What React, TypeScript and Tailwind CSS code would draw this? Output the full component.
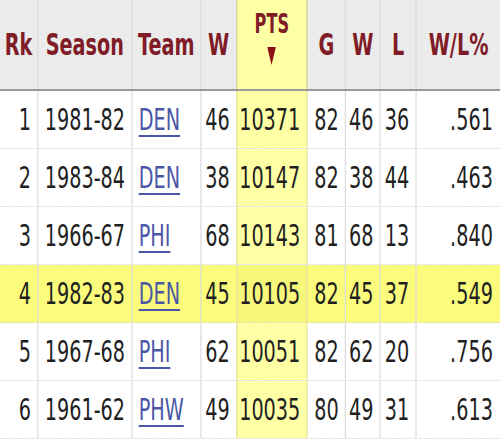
import React from 'react';

type Row = {
    rk: number;
    season: string;
    team: string;
    w: number;
    pts: number;
    g: number;
    w2: number;
    l: number;
    pct: string;
    hi?: boolean;
};

const rows: Row[] = [
    { rk: 1, season: '1981-82', team: 'DEN', w: 46, pts: 10371, g: 82, w2: 46, l: 36, pct: '.561' },
    { rk: 2, season: '1983-84', team: 'DEN', w: 38, pts: 10147, g: 82, w2: 38, l: 44, pct: '.463' },
    { rk: 3, season: '1966-67', team: 'PHI', w: 68, pts: 10143, g: 81, w2: 68, l: 13, pct: '.840' },
    { rk: 4, season: '1982-83', team: 'DEN', w: 45, pts: 10105, g: 82, w2: 45, l: 37, pct: '.549', hi: true },
    { rk: 5, season: '1967-68', team: 'PHI', w: 62, pts: 10051, g: 82, w2: 62, l: 20, pct: '.756' },
    { rk: 6, season: '1961-62', team: 'PHW', w: 49, pts: 10035, g: 80, w2: 49, l: 31, pct: '.613' },
];

const line = 'border-l-2 border-[#dcdcdc]';

const App: React.FC = () => {
    return (
        <div className="w-[500px] h-[440px] overflow-hidden bg-white">
            {/* the source table is squeezed sideways, so lay it out wide and scale x */}
            <div className="w-[807px] origin-top-left scale-x-[0.62] font-['DejaVu_Sans',sans-serif] text-[31px] text-[#1f1f1f]">
                <div className="flex h-[91px] bg-[#ebebeb] border-b-2 border-[#9a9a9a] font-bold text-[#7f1c27]">
                    <div className="w-[60px] flex items-center justify-center">Rk</div>
                    <div className={`w-[152px] flex items-center justify-center ${line}`}>Season</div>
                    <div className={`w-[111px] flex items-center justify-center ${line}`}>Team</div>
                    <div className={`w-[58px] flex items-center justify-center ${line}`}>W</div>
                    <div className="w-[116px] flex flex-col items-center bg-[#ffffa6] border-x-2 border-[#cfcf9a] pt-[9px]">
                        <span className="text-[26px] leading-[30px]">PTS</span>
                        <svg width="14" height="18" viewBox="0 0 14 18" className="mt-[8px]">
                            <polygon points="0,0 14,0 7,18" fill="#8b0f14" />
                        </svg>
                    </div>
                    <div className="w-[60px] flex items-center justify-center">G</div>
                    <div className={`w-[56px] flex items-center justify-center ${line}`}>W</div>
                    <div className={`w-[58px] flex items-center justify-center ${line}`}>L</div>
                    <div className={`w-[137px] flex items-center justify-center ${line}`}>W/L%</div>
                </div>
                {rows.map((r) => (
                    <div
                        key={r.rk}
                        className={`flex h-[58px] border-b border-dotted border-[#d0d0d0] ${r.hi ? 'bg-[#fbfb7c]' : 'bg-white'}`}
                    >
                        <div className="w-[60px] flex items-center justify-end pr-[10px]">{r.rk}</div>
                        <div className={`w-[152px] flex items-center justify-end pr-[10px] ${line}`}>{r.season}</div>
                        <div className={`w-[111px] flex items-center pl-[10px] ${line}`}>
                            <a href="#" className="text-[#4b57a6] underline decoration-2 underline-offset-[5px]">{r.team}</a>
                        </div>
                        <div className={`w-[58px] flex items-center justify-end pr-[10px] ${line}`}>{r.w}</div>
                        <div
                            className={`w-[116px] flex items-center justify-end pr-[10px] border-x-2 border-[#e3e3a0] ${r.hi ? 'bg-[#f7f77c]' : 'bg-[#ffffa6]'}`}
                        >
                            {r.pts}
                        </div>
                        <div className="w-[60px] flex items-center justify-end pr-[10px]">{r.g}</div>
                        <div className={`w-[56px] flex items-center justify-end pr-[10px] ${line}`}>{r.w2}</div>
                        <div className={`w-[58px] flex items-center justify-end pr-[10px] ${line}`}>{r.l}</div>
                        <div className={`w-[137px] flex items-center justify-end pr-[12px] ${line}`}>{r.pct}</div>
                    </div>
                ))}
            </div>
        </div>
    );
};

export default App;
